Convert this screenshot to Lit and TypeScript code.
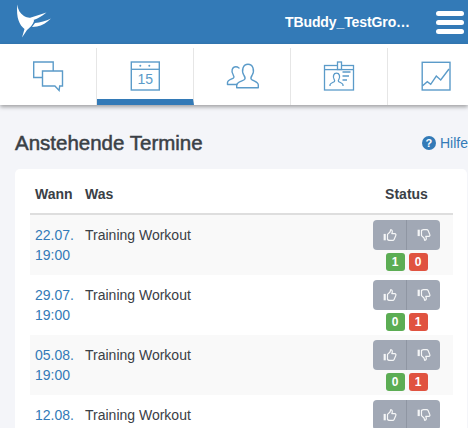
import { LitElement, html, css, svg } from "lit";
import { customElement } from "lit/decorators.js";

const hand = svg`<path d="M.6 4.900h2.200v6.400H.6z" fill="#fff" stroke="none"/><path d="M4.500 5.400 7 3 7.700.7c1.700 0 2.100 1.700 1.100 3.900h2.800c1.300 0 1.600 1.300 1.100 2.100l-1.600 3.700c-.3.700-.8.900-1.500.9H6.500c-.9 0-1.300-.4-2-.7z" fill="none" stroke="#fff" stroke-width="1.200" stroke-linejoin="round"/>`;
const thumbUp = svg`<svg class="thumb" viewBox="0 0 14 12" width="14" height="12">${hand}</svg>`;
const thumbDown = svg`<svg class="thumb" viewBox="0 0 14 12" width="14" height="12"><g transform="matrix(1 0 0 -1 0 12)">${hand}</g></svg>`;

const icons = [
  svg`<svg viewBox="0 0 32 32" width="32" height="32"><g fill="#fff" stroke="#5b9bc9" stroke-width="1.400"><path d="M1.700 1h19.500v15.500H1.700z"/><path d="M10.500 10h20v15h-2.800l-.6 4.500-4.200-4.500H10.500z"/></g></svg>`,
  svg`<svg viewBox="0 0 30 30" width="30" height="30"><rect x="1.300" y="1" width="28" height="28" fill="none" stroke="#5b9bc9" stroke-width="1.400"/><path d="M1.300 8.300h28" stroke="#5b9bc9" stroke-width="1.300"/><circle cx="10.300" cy="4.700" r="1" fill="#5b9bc9"/><circle cx="19.300" cy="4.700" r="1" fill="#5b9bc9"/><text x="15.200" y="22.800" text-anchor="middle" class="cal">15</text></svg>`,
  svg`<svg viewBox="0 0 36 30" width="36" height="30"><g fill="none" stroke="#5b9bc9" stroke-width="1.400" stroke-linejoin="round" stroke-linecap="round"><path d="M12.700 26.800V24C12.700 21 18 20.300 20.500 18.500 21.700 17.500 21 16 20 14.500 18.500 12 18.300 9 19 7 19.800 4.800 21.700 3.300 24 3.300 26.300 3.300 28.200 4.800 29 7 29.700 9 29.500 12 28 14.500 27 16 26.300 17.500 27.500 18.500 30 20.300 34.300 21 34.300 24V26.800Z"/><path d="M13 23.500H3.500V21.500C3.500 19 8 18 9.500 17 10.300 16.300 10 15.300 9.300 14.200 8 12.300 7.700 10 8.200 8.500 8.800 6.800 10 5.700 11.800 5.700 13 5.700 14 6.200 15 7"/></g></svg>`,
  svg`<svg viewBox="0 0 32 32" width="32" height="32"><g fill="none" stroke="#5b9bc9" stroke-width="1.300"><rect x="1.500" y="4.500" width="29" height="24.500"/><path d="M1.500 8.600h29"/><rect x="14.500" y="1" width="4" height="7.500" fill="#fff"/><path d="M7 25v-1.200c0-1.700 3-2.200 4.400-3.300.6-.6.300-1.200-.2-2-.9-1.400-1-3-.6-4.300.4-1.300 1.300-2 2.900-2s2.500.7 2.900 2c.4 1.300.3 2.900-.6 4.300-.5.800-.8 1.400-.2 2 1.400 1.100 4.400 1.600 4.400 3.300V25M19.500 11h8M19.500 15h6.500M19.500 19h4.500"/></g></svg>`,
  svg`<svg viewBox="0 0 30 30" width="30" height="30"><g fill="none" stroke="#5b9bc9" stroke-width="1.400"><rect x="1.200" y="1.300" width="27.800" height="27.700"/><path d="M1.300 25l5-4.300 3.400 2.600 5.600-8.300 4.400 4L28 8"/></g></svg>`,
];

const rows = [
  { d: "22.07.", yes: 1, no: 0 },
  { d: "29.07.", yes: 0, no: 1 },
  { d: "05.08.", yes: 0, no: 1 },
  { d: "12.08.", yes: 0, no: 1 },
];

@customElement("app-root")
export class AppRoot extends LitElement {
  static styles = css`
    :host {
      display: block;
      width: 468px;
      height: 428px;
      overflow: hidden;
      background: #f4f5f9;
      font-family: "Liberation Sans", Arial, sans-serif;
      color: #3a4046;
    }
    .top {
      height: 44px;
      background: #337ab7;
      display: flex;
      align-items: center;
      padding-left: 16px;
      padding-right: 4px;
      box-sizing: border-box;
    }
    .logo { flex: none; }
    .title {
      margin-left: auto;
      margin-right: 26px;
      color: #fff;
      font-weight: bold;
      font-size: 14px;
      letter-spacing: -0.1px;
      white-space: nowrap;
    }
    .burger { display: flex; flex-direction: column; gap: 4px; width: 28px; }
    .burger span { height: 5px; background: #fff; border-radius: 2.5px; }
    .tabs {
      height: 61px;
      background: #fff;
      padding-top: 4px;
      box-sizing: border-box;
      display: flex;
      overflow: hidden;
      box-shadow: 0 2px 4px rgba(0,0,0,0.35);
      position: relative;
    }
    .tab {
      flex: 0 0 97px;
      box-sizing: border-box;
      border-right: 1px solid #e6e6e6;
      display: flex;
      justify-content: center;
      padding-top: 13px;
    }
    .tab.active { border-bottom: 6px solid #337ab7; }
    .cal { font: 14px "Liberation Sans", Arial, sans-serif; fill: #5b9bc9; }
    .head {
      display: flex;
      align-items: center;
      justify-content: space-between;
      padding: 26px 0 14px 15px;
      height: 24px;
    }
    h1 {
      margin: 0;
      font-size: 20.5px;
      font-weight: normal;
      -webkit-text-stroke: 0.5px #3a4046;
      white-space: nowrap;
    }
    .help { display: flex; align-items: center; gap: 4px; color: #337ab7; font-size: 14px; }
    .q {
      width: 14px; height: 14px; border-radius: 50%;
      background: #337ab7; color: #fff;
      font-size: 11px; font-weight: bold; line-height: 14px; text-align: center;
    }
    .card {
      margin-left: 15px;
      margin-right: 1px;
      background: #fff;
      border-radius: 5px 5px 0 0;
      padding: 15px 14px 0 15px;
    }
    .row {
      display: grid;
      grid-template-columns: 50px 1fr 80px;
      padding-left: 5px;
      font-size: 14px;
      line-height: 20px;
    }
    .row.th { font-weight: bold; height: 29px; border-bottom: 2px solid #dedede; }
    .th .st { text-align: center; padding-right: 13px; }
    .row.ev { height: 60px; padding-top: 10px; box-sizing: border-box; }
    .row.odd { background: #f9f9f9; }
    .date { color: #337ab7; }
    .cell { margin-top: -5px; width: 67px; }
    .btns {
      display: flex; height: 30px; border-radius: 4px; overflow: hidden;
      background: #a1a8b5;
    }
    .btns span { flex: 1; display: flex; align-items: center; justify-content: center; }
    .btns span + span { border-left: 1px solid #8f96a3; }
    .thumb { display: block; opacity: .9; }
    .counts { display: flex; justify-content: center; gap: 4px; margin-top: 3px; }
    .badge {
      width: 19px; height: 18px; border-radius: 3px; color: #fff;
      font-size: 12px; font-weight: bold; line-height: 18px; text-align: center;
    }
    .g { background: #5cad54; }
    .r { background: #e05340; }
  `;

  render() {
    return html`
      <div class="top">
        <svg class="logo" viewBox="16 4 36 36" width="36" height="36">
          <g fill="#fff">
            <path d="M17.300 4.500C17.800 9.500 20 13.500 24 16 26.500 17.500 29 18 31 17.500 33 18 34 19.500 34 21 33 24.500 30 27.500 27 30L22 37.500 24.500 29C19.500 25 16 18 17.300 4.500z"/>
            <path d="M31 17.500 46.500 12.500C42 16 38 18.500 33.500 20z"/>
            <path d="M35 23C40 22.500 46 21 51 18.500 47 22.500 42 25.500 37 26.500L32 27z"/>
          </g>
        </svg>
        <div class="title">TBuddy_TestGro…</div>
        <div class="burger"><span></span><span></span><span></span></div>
      </div>
      <div class="tabs">
        ${icons.map((ic, i) => html`<div class="tab ${i === 1 ? "active" : ""}">${ic}</div>`)}
      </div>
      <div class="head">
        <h1>Anstehende Termine</h1>
        <div class="help"><span class="q">?</span>Hilfe</div>
      </div>
      <div class="card">
        <div class="row th"><div>Wann</div><div>Was</div><div class="st">Status</div></div>
        ${rows.map((r, i) => html`
          <div class="row ev ${i % 2 === 0 ? "odd" : ""}">
            <div class="date">${r.d}<br />19:00</div>
            <div>Training Workout</div>
            <div class="cell">
              <div class="btns"><span>${thumbUp}</span><span>${thumbDown}</span></div>
              <div class="counts"><div class="badge g">${r.yes}</div><div class="badge r">${r.no}</div></div>
            </div>
          </div>`)}
      </div>
    `;
  }
}
